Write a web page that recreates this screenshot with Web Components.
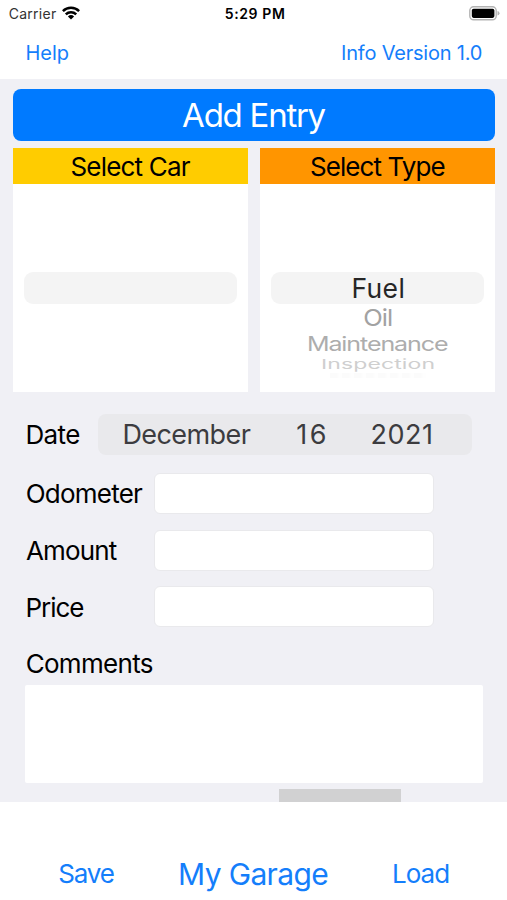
<!DOCTYPE html>
<html lang="en">
<head>
<meta charset="utf-8">
<title>Add Entry</title>
<style>
html,body{margin:0;background:#fff}
body{font-family:Inter,"Liberation Sans",sans-serif;color:#000}
</style>
</head>
<body>
<garage-app></garage-app>
<script>
const ctx = document.createElement('canvas').getContext('2d');
class Base extends HTMLElement {
  constructor() {
    super();
    this.attachShadow({mode: 'open'}).innerHTML = this.view();
  }
}

class FitLabel extends Base {
  view() {
    return `<style>:host{display:block;flex:none;line-height:1.2;white-space:nowrap;padding-top:var(--drop,0px)}
      span{display:inline-block;vertical-align:top}</style><span><slot></slot></span>`;
  }
  connectedCallback() {
    const size = +this.getAttribute('size'), w = +this.getAttribute('w');
    const weight = this.getAttribute('weight') || 400;
    const text = this.textContent;
    /* Measured at ten times the size, since glyph bounds come in whole pixels. */
    ctx.font = `${weight} ${size * 10}px Inter`;
    const m = ctx.measureText(text);
    const left = m.actualBoundingBoxLeft / 10;
    const bearings = (m.width - m.actualBoundingBoxLeft - m.actualBoundingBoxRight) / 10;
    this.style.width = w + 'px';
    this.style.fontSize = size + 'px';
    this.style.fontWeight = weight;
    const span = this.shadowRoot.querySelector('span');
    span.style.letterSpacing = '0.01px';
    const advance = span.getBoundingClientRect().width || m.width / 10;
    span.style.letterSpacing = (w - advance + bearings + left * .7) / (text.length - 1) + 'px';
    span.style.marginLeft = left * .3 + 'px';
  }
}
customElements.define('fit-label', FitLabel);

class StatusBar extends Base {
  view() {
    return `<style>:host{display:grid;grid-template-columns:1fr auto 1fr;align-items:center;height:27px;padding:0 7px 0 9px;box-sizing:border-box;--drop:1.5px}
      .l{display:flex;align-items:center;gap:6px;color:#333}.r{justify-self:end;height:15px}svg{display:block}</style>
      <div class="l"><fit-label size="14" w="47">Carrier</fit-label>
      <svg width="18" height="14" viewBox="0 0 18 14" fill="none" stroke="#000" stroke-width="2.5"><path d="M.9 5.2a11.5 11.5 0 0 1 16.2 0M3.8 8.3a7.4 7.4 0 0 1 10.4 0"/><path d="M9 13.6 5.9 10.5a4.5 4.5 0 0 1 6.2 0z" fill="#000" stroke="none"/></svg></div>
      <fit-label size="14" w="59" weight="600">5:29 PM</fit-label>
      <div class="r"><svg width="31" height="15" viewBox="0 0 31 15"><rect x=".8" y=".8" width="26.4" height="13" rx="3.8" fill="#fff" stroke="#b3b3b3" stroke-width="1.4"/><rect x="2.8" y="2.7" width="22.6" height="9.2" rx="1.8"/><path d="M28.5 5v4.6q2-.6 2-2.3t-2-2.3" fill="#b3b3b3"/></svg></div>`;
  }
}
customElements.define('status-bar', StatusBar);

class NavBar extends Base {
  view() {
    return `<style>:host{display:flex;justify-content:space-between;align-items:center;height:52px;padding:0 25.5px 1px 26px;box-sizing:border-box;color:#147efb}</style><slot></slot>`;
  }
}
customElements.define('nav-bar', NavBar);

class PrimaryButton extends Base {
  view() {
    return `<style>:host{display:flex;justify-content:center;align-items:center;height:52px;border-radius:8px;background:#007aff;color:#fff;--drop:2px}</style><slot></slot>`;
  }
}
customElements.define('primary-button', PrimaryButton);

class WheelPicker extends Base {
  view() {
    return `<style>:host{display:flex;flex-direction:column;height:244px;background:#fff;--drop:2px}
      header{display:flex;justify-content:center;align-items:center;height:36.5px;background:var(--head)}
      .wheel{padding:88px 11px 0}
      .sel{display:flex;justify-content:center;align-items:center;height:32px;border-radius:9px;background:#f4f4f4;color:#262626}</style>
      <header><slot name="title"></slot></header>
      <div class="wheel"><div class="sel"><slot name="selected"></slot></div><slot></slot></div>`;
  }
}
customElements.define('wheel-picker', WheelPicker);

/* A row on the wheel, foreshortened by --s as it turns away. */
class WheelRow extends Base {
  view() {
    return `<style>:host{display:flex;justify-content:center;align-items:center;height:var(--h)}
      div{transform:scaleY(var(--s))}</style><div><slot></slot></div>`;
  }
}
customElements.define('wheel-row', WheelRow);

class DateField extends Base {
  view() {
    return `<style>:host{display:flex;align-items:center;width:374px;height:41px;box-sizing:border-box;padding-left:25px;border-radius:8px;background:#e9e9ec;color:#3c3c40;--drop:2px}
      fit-label+fit-label{margin-left:46px}</style>
      <fit-label size="27" w="127.5">December</fit-label><fit-label size="27" w="28.5">16</fit-label><fit-label size="27" w="60">2021</fit-label>`;
  }
}
customElements.define('date-field', DateField);

class FormRow extends Base {
  view() {
    return `<style>:host{display:grid;grid-template-columns:var(--label,128px) 1fr;align-items:center;height:41px}</style><slot></slot>`;
  }
}
customElements.define('form-row', FormRow);

class TextField extends Base {
  view() {
    return `<style>:host{display:block;width:280px;height:41px;box-sizing:border-box;border:1px solid #e9e9ec;border-radius:6px;background:#fff}</style>`;
  }
}
customElements.define('text-field', TextField);

class BottomBar extends Base {
  view() {
    return `<style>:host{display:flex;justify-content:space-between;align-items:center;height:98px;box-sizing:border-box;padding:46px 58.5px 0;background:#fff;color:#147efb}</style><slot></slot>`;
  }
}
customElements.define('bottom-bar', BottomBar);

class GarageApp extends Base {
  view() {
    return `<style>
      :host{display:flex;flex-direction:column;width:507px;height:900px;overflow:hidden}
      main{height:723px;background:#f0f0f5;box-sizing:border-box;padding:10px 12px 0 13px;display:flex;flex-direction:column}
      .pickers{display:grid;grid-template-columns:235px 235px;column-gap:12px;margin-top:6.5px}
      .form{padding:22.5px 0 0 13px;display:grid;row-gap:15.8px;--drop:.6px}
      .form form-row:first-child{--label:72px;margin-bottom:2px;--drop:.6px}
      .cap{height:41px;display:flex;align-items:center;--drop:0px}
      .notes{height:98px;margin:.6px 12px 0;background:#fff;border-radius:2px}
      .bar{width:122px;height:13px;margin:6px 0 0 266px;background:#d1d1d2}
      .edge{width:96px;height:5px;margin:1px auto 0;background:repeating-linear-gradient(90deg,#fbfbfb 0 7px,#fefefe 9px 12px)}
      </style>
      <status-bar></status-bar>
      <nav-bar><fit-label size="20" w="42">Help</fit-label><fit-label size="20" w="140">Info Version 1.0</fit-label></nav-bar>
      <main>
        <primary-button><fit-label size="33" w="143.5">Add Entry</fit-label></primary-button>
        <div class="pickers">
          <wheel-picker style="--head:#fc0"><fit-label slot="title" size="26" w="119.5">Select Car</fit-label></wheel-picker>
          <wheel-picker style="--head:#ff9500"><fit-label slot="title" size="26" w="134.5">Select Type</fit-label>
            <fit-label slot="selected" size="26.5" w="51">Fuel</fit-label>
            <wheel-row style="--h:26.6px;--s:.9;color:#a2a2a2"><fit-label size="25.5" w="27.5">Oil</fit-label></wheel-row>
            <wheel-row style="--h:25px;--s:.78;color:#adadad"><fit-label size="25" w="140">Maintenance</fit-label></wheel-row>
            <wheel-row style="--h:16.5px;--s:.6;color:#cfcfcf"><fit-label size="23" w="112">Inspection</fit-label></wheel-row>
            <div class="edge"></div>
          </wheel-picker>
        </div>
        <div class="form">
          <form-row><fit-label size="26" w="53.5">Date</fit-label><date-field></date-field></form-row>
          <form-row><fit-label size="26" w="116.5">Odometer</fit-label><text-field></text-field></form-row>
          <form-row><fit-label size="26" w="91">Amount</fit-label><text-field></text-field></form-row>
          <form-row><fit-label size="26" w="57.5">Price</fit-label><text-field></text-field></form-row>
          <div class="cap"><fit-label size="26" w="126.5">Comments</fit-label></div>
        </div>
        <div class="notes"></div>
        <div class="bar"></div>
      </main>
      <bottom-bar><fit-label size="26" w="55.5">Save</fit-label><fit-label size="30" w="149">My Garage</fit-label><fit-label size="26" w="56">Load</fit-label></bottom-bar>`;
  }
}
customElements.define('garage-app', GarageApp);
</script>
</body>
</html>
